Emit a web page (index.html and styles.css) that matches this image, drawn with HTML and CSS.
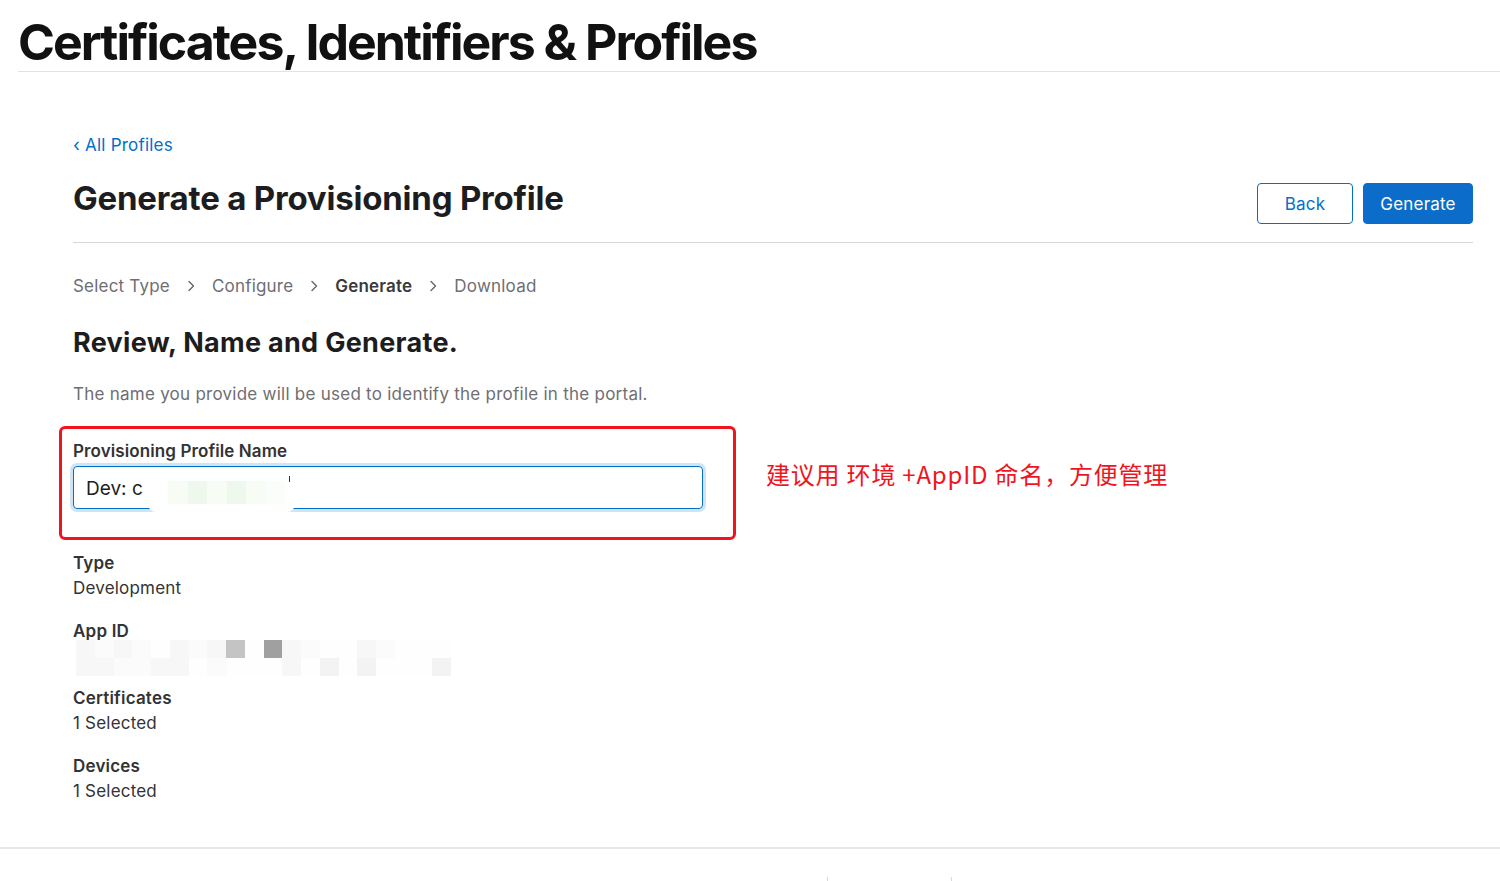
FILE: index.html
```html
<!DOCTYPE html>
<html lang="en">
<head>
<meta charset="utf-8">
<title>Certificates, Identifiers &amp; Profiles</title>
<link rel="stylesheet" href="styles.css">
</head>
<body>
<header class="top">
  <h1 class="top-title">Certificates, Identifiers &amp; Profiles</h1>
</header>
<main class="main">
  <a class="back-link" href="#"><span class="back-chev">‹</span> All Profiles</a>
  <div class="page-head">
    <h2 class="page-title">Generate a Provisioning Profile</h2>
    <div class="actions">
      <button class="btn btn-outline">Back</button>
      <button class="btn btn-primary">Generate</button>
    </div>
  </div>
  <nav class="steps">
    <span class="step">Select Type</span>
    <svg class="chev" viewBox="0 0 8 12" width="8" height="12"><path d="M2 1.5 L6.5 6 L2 10.5" fill="none" stroke="#666" stroke-width="1.4" stroke-linecap="round" stroke-linejoin="round"/></svg>
    <span class="step">Configure</span>
    <svg class="chev" viewBox="0 0 8 12" width="8" height="12"><path d="M2 1.5 L6.5 6 L2 10.5" fill="none" stroke="#666" stroke-width="1.4" stroke-linecap="round" stroke-linejoin="round"/></svg>
    <span class="step step-active">Generate</span>
    <svg class="chev" viewBox="0 0 8 12" width="8" height="12"><path d="M2 1.5 L6.5 6 L2 10.5" fill="none" stroke="#666" stroke-width="1.4" stroke-linecap="round" stroke-linejoin="round"/></svg>
    <span class="step">Download</span>
  </nav>
  <h3 class="section-title">Review, Name and Generate.</h3>
  <p class="desc">The name you provide will be used to identify the profile in the portal.</p>

  <div class="annot-row">
    <div class="annot-box">
      <label class="field-label">Provisioning Profile Name</label>
      <div class="input-wrap">
        <div class="input">Dev: c</div>
        <div class="redact">
          <span class="rc rc1"></span><span class="rc rc2"></span><span class="rc rc3"></span><span class="rc rc4"></span><span class="rc rc5"></span><span class="rc rc6"></span>
        </div>
        <span class="tick"></span>
      </div>
    </div>
    <div class="annot-text">建议用 环境 +AppID 命名，方便管理</div>
  </div>

  <div class="field">
    <div class="f-label">Type</div>
    <div class="f-value">Development</div>
  </div>
  <div class="field field-app">
    <div class="f-label">App ID</div>
    <div class="mosaic">
      <span class="m a"></span><span class="m b"></span><span class="m a"></span><span class="m b"></span><span class="m w"></span><span class="m a"></span><span class="m b"></span><span class="m a"></span><span class="m g1"></span><span class="m w"></span><span class="m g2"></span><span class="m a"></span><span class="m b"></span><span class="m w"></span><span class="m w"></span><span class="m a"></span><span class="m b"></span><span class="m w"></span><span class="m w"></span><span class="m w"></span>
      <span class="m a"></span><span class="m a"></span><span class="m b"></span><span class="m b"></span><span class="m a"></span><span class="m a"></span><span class="m w"></span><span class="m b"></span><span class="m w"></span><span class="m w"></span><span class="m w"></span><span class="m a"></span><span class="m w"></span><span class="m c"></span><span class="m w"></span><span class="m c"></span><span class="m w"></span><span class="m w"></span><span class="m w"></span><span class="m c"></span>
    </div>
  </div>
  <div class="field">
    <div class="f-label">Certificates</div>
    <div class="f-value">1 Selected</div>
  </div>
  <div class="field">
    <div class="f-label">Devices</div>
    <div class="f-value">1 Selected</div>
  </div>
</main>
<footer class="footer">
  <div class="footer-links">
    <span class="sep"></span>
    <span class="sep"></span>
  </div>
</footer>
</body>
</html>
```

FILE: styles.css
```css
html, body {
  margin: 0;
  padding: 0;
  background: #fff;
}
body {
  font-family: Inter, "Noto Sans", "Noto Sans CJK SC", sans-serif;
  color: #1d1d1f;
  width: 1500px;
  overflow: hidden;
}
.top {
  margin-left: 18px;
  border-bottom: 1px solid #e2e2e2;
  height: 71px;
}
.top-title {
  margin: 0;
  padding-top: 12px;
  font-size: 50px;
  line-height: 60px;
  font-weight: 700;
  letter-spacing: -2px;
  color: #111;
}
.main {
  padding: 61px 27px 0 73px;
}
.back-link {
  display: block;
  color: #0070c9;
  text-decoration: none;
  font-size: 17px;
  line-height: 24px;
  letter-spacing: 0.2px;
}
.back-chev {
  font-size: 18px;
}
.page-head {
  display: flex;
  align-items: flex-start;
  justify-content: space-between;
  margin-top: 21px;
  padding-bottom: 18px;
  border-bottom: 1px solid #d6d6d6;
}
.page-title {
  margin: 0;
  font-size: 33px;
  line-height: 40px;
  font-weight: 700;
  letter-spacing: -0.2px;
  color: #1d1d1f;
}
.actions {
  display: flex;
  gap: 10px;
  margin-top: 5px;
}
.btn {
  font-family: inherit;
  font-size: 17px;
  height: 41px;
  border-radius: 4px;
  padding: 0;
  letter-spacing: 0.2px;
  cursor: pointer;
}
.btn-outline {
  width: 96px;
  background: #fff;
  color: #0070c9;
  border: 1px solid #0070c9;
}
.btn-primary {
  width: 110px;
  background: #0b6dc9;
  color: #fff;
  border: 1px solid #0b6dc9;
}
.steps {
  display: flex;
  align-items: center;
  gap: 17px;
  margin-top: 31px;
  font-size: 17px;
  line-height: 24px;
  color: #6e6e73;
  letter-spacing: 0.2px;
}
.step-active {
  font-weight: 600;
  color: #3a3a3c;
}
.chev {
  display: block;
}
.section-title {
  margin: 29px 0 0;
  font-size: 27px;
  line-height: 32px;
  font-weight: 700;
  color: #1d1d1f;
  letter-spacing: 0.3px;
}
.desc {
  margin: 23px 0 0;
  font-size: 17px;
  line-height: 24px;
  color: #6e6e73;
  letter-spacing: 0.25px;
}
.annot-row {
  display: flex;
  align-items: flex-start;
  margin-top: 20px;
  margin-left: -14px;
}
.annot-box {
  border: 3px solid #f0141e;
  border-radius: 6px;
  padding: 10px 0 0 11px;
  box-sizing: border-box;
  width: 677px;
  height: 114px;
}
.field-label {
  display: block;
  font-size: 17px;
  line-height: 24px;
  font-weight: 600;
  color: #333;
  letter-spacing: 0.1px;
}
.input-wrap {
  position: relative;
  margin-top: 3px;
  width: 630px;
}
.input {
  height: 43px;
  box-sizing: border-box;
  border: 1px solid #0070c9;
  border-radius: 4px;
  box-shadow: 0 0 0 3px rgba(0, 112, 201, 0.19);
  padding: 2px 12px 0;
  font-size: 19px;
  line-height: 39px;
  color: #1d1d1f;
}
.redact {
  position: absolute;
  left: 75px;
  top: 9px;
  width: 147px;
  height: 37px;
  background: #fff;
  border-radius: 8px;
  display: flex;
  padding: 6px 10px 8px 20px;
  box-sizing: border-box;
}
.rc {
  flex: 1;
  background: #f7fcf5;
}
.rc2, .rc4 { background: #eff8ec; }
.rc6 { background: #fafdf9; }
.tick {
  position: absolute;
  left: 216px;
  top: 10px;
  width: 1px;
  height: 6px;
  background: #333;
}
.annot-text {
  margin-left: 30px;
  margin-top: 33px;
  font-size: 24px;
  line-height: 30px;
  color: #f0141e;
  letter-spacing: 0.8px;
  font-family: "Noto Sans CJK SC", sans-serif;
}
.field {
  margin-top: 11px;
}
.field + .field {
  margin-top: 18px;
}
.f-label {
  font-size: 17px;
  line-height: 25px;
  font-weight: 600;
  color: #333;
  letter-spacing: 0.2px;
}
.f-value {
  font-size: 17px;
  line-height: 25px;
  color: #333;
  letter-spacing: 0.2px;
}
.mosaic {
  display: grid;
  grid-template-columns: repeat(20, 18.75px);
  grid-auto-rows: 18px;
  margin-left: 3px;
  margin-top: -4px;
  margin-bottom: -8px;
}
.m.a { background: #f7f7f8; }
.m.b { background: #fbfbfc; }
.m.w { background: #fefefe; }
.m.c { background: #f3f3f4; }
.m.g1 { background: #c4c4c4; }
.m.g2 { background: #a0a0a0; }
.footer {
  margin-top: 43px;
  border-top: 2px solid #e8e8e8;
  height: 40px;
}
.footer-links {
  display: flex;
  justify-content: center;
  gap: 123px;
  padding-top: 28px;
  padding-left: 278px;
  box-sizing: border-box;
}
.sep {
  width: 1px;
  height: 10px;
  background: #d8d8d8;
}
```
